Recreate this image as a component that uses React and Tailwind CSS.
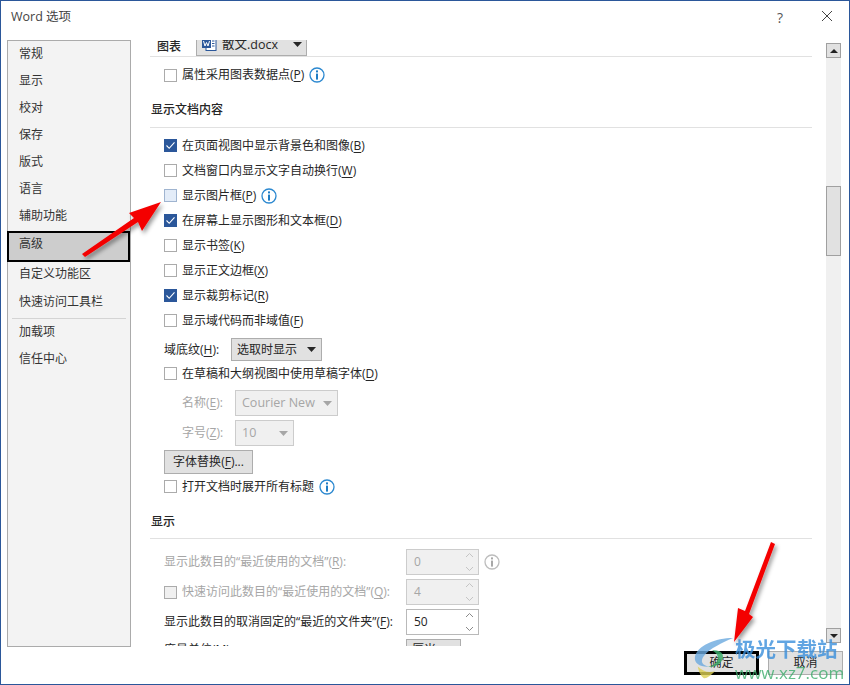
import React from 'react';

const navTop = ['常规', '显示', '校对', '保存', '版式', '语言', '辅助功能'];

const Info = ({ gray }) => (
  <svg width="16" height="16" viewBox="0 0 16 16" className="ml-[5px] shrink-0">
    <circle cx="8" cy="8" r="7" fill="#fff" stroke={gray ? '#bdbdbd' : '#2b88d0'} strokeWidth="1.3" />
    <rect x="7" y="3.4" width="2" height="2" fill={gray ? '#a8a8a8' : '#1f7cc4'} />
    <rect x="7" y="6.6" width="2" height="6" fill={gray ? '#a8a8a8' : '#1f7cc4'} />
  </svg>
);

const Box = ({ checked, hover, disabled }) => {
  if (checked) {
    return (
      <span className="w-[13px] h-[13px] shrink-0 bg-[#2b579a] border border-[#2b579a] flex items-center justify-center">
        <svg width="11" height="11" viewBox="0 0 11 11">
          <path d="M1.5 5.5 L4.2 8.3 L9.5 2.4" fill="none" stroke="#fff" strokeWidth="1.1" />
        </svg>
      </span>
    );
  }
  if (hover) return <span className="w-[13px] h-[13px] shrink-0 bg-[#e3ecf8] border border-[#9fb4d0]" />;
  if (disabled) return <span className="w-[13px] h-[13px] shrink-0 bg-[#f0f0f0] border border-[#ababab]" />;
  return <span className="w-[13px] h-[13px] shrink-0 bg-white border border-[#ababab]" />;
};

// label with the accelerator letter underlined
const Label = ({ text, k, tail }) => (
  <span className="whitespace-nowrap">
    {text}
    {k && <>(<span className="underline underline-offset-2">{k}</span>)</>}
    {tail}
  </span>
);

const Check = ({ text, k, checked, hover, info }) => (
  <div className="h-[25px] shrink-0 flex items-center pl-[14px] text-[#262626]">
    <Box checked={checked} hover={hover} />
    <span className="ml-[5px]"><Label text={text} k={k} /></span>
    {info && <Info />}
  </div>
);

const Caret = ({ color = '#262626' }) => (
  <svg width="9" height="5" viewBox="0 0 9 5" className="shrink-0">
    <path d="M0 0 H9 L4.5 5 Z" fill={color} />
  </svg>
);

const Chevrons = ({ color }) => (
  <svg width="9" height="20" viewBox="0 0 9 20" className="shrink-0">
    <path d="M1 5 L4.5 1.5 L8 5" fill="none" stroke={color} />
    <path d="M1 15 L4.5 18.5 L8 15" fill="none" stroke={color} />
  </svg>
);

const Spin = ({ value, disabled }) => (
  <div className={`w-[73px] h-[26px] shrink-0 flex items-center justify-between pl-[7px] pr-[4px] border ${disabled ? 'bg-[#f0f0f0] border-[#cccccc] text-[#a6a6a6]' : 'bg-white border-[#b9b9b9] text-[#262626]'}`}>
    <span>{value}</span>
    <Chevrons color={disabled ? '#c4c4c4' : '#8a8a8a'} />
  </div>
);

const Heading = ({ children, className }) => (
  <div className={`h-[20px] pl-px pt-[2px] flex items-center text-[#262626] font-medium ${className}`}>{children}</div>
);

const Line = ({ className }) => <div className={`h-px bg-[#e1e1e1] ${className}`} />;

const DisabledSelect = ({ text, width }) => (
  <div className={`${width} h-[26px] bg-[#f0f0f0] border border-[#cccccc] flex items-center justify-between pl-[6px] pr-[5px] text-[#a6a6a6] text-[12.5px]`}>
    <span>{text}</span>
    <Caret color="#a6a6a6" />
  </div>
);

export default function App() {
  return (
    <div className="relative w-[850px] h-[685px] overflow-hidden bg-white border border-[#2b579a] text-[12px] font-['Open_Sans','Noto_Sans_CJK_SC',sans-serif]">
      {/* title bar */}
      <div className="h-[39px] flex items-start pt-[6px] pl-[10px] text-[#444444]">
        <span className="text-[12.5px] mt-px">Word 选项</span>
        <span className="ml-auto text-[14px] text-[#555555]">?</span>
        <svg width="12" height="12" viewBox="0 0 12 12" className="ml-[38px] mr-[16px] mt-[3px]">
          <path d="M1 1 L11 11 M11 1 L1 11" stroke="#444" strokeWidth="1" />
        </svg>
      </div>

      <div className="h-[607px] flex pl-[6px]">
        {/* left nav */}
        <div className="w-[124px] shrink-0 border border-[#ababab] bg-[#f3f3f3] text-[#333333] flex flex-col">
          {navTop.map((n) => (
            <div key={n} className="h-[27px] flex items-center pl-[11px] pb-[2px]">{n}</div>
          ))}
          <div className="h-[31px] -ml-px mt-px border-2 border-black bg-[#cdcdcd] flex items-center pl-[10px] pb-[5px]">高级</div>
          <div className="h-[26px] flex items-center pl-[11px] pb-[2px]">自定义功能区</div>
          <div className="h-[28px] flex items-center pl-[11px]">快速访问工具栏</div>
          <div className="h-px bg-[#d4d4d4] mx-[4px] mt-[2px]" />
          <div className="h-[26px] flex items-center pl-[11px]">加载项</div>
          <div className="h-[27px] flex items-center pl-[11px]">信任中心</div>
        </div>

        {/* scrolled options */}
        <div className="w-[662px] h-[606px] ml-[19px] shrink-0 overflow-hidden flex flex-col">
          <div className="h-[16px] shrink-0 overflow-hidden flex items-end pl-[7px] text-[#262626]">
            <span className="font-medium w-[39px]">图表</span>
            <div className="w-[111px] h-[24px] shrink-0 bg-[#e1e1e1] border border-[#adadad] flex items-center pl-[5px] pr-[4px]">
              <svg width="15" height="14" viewBox="0 0 15 14" className="shrink-0">
                <rect x="4" y="0.5" width="10" height="13" fill="#fff" stroke="#2b579a" />
                <rect x="0" y="2" width="9" height="9" fill="#2b579a" />
                <path d="M1.5 4 L3 9 L4.5 5.5 L6 9 L7.5 4" fill="none" stroke="#fff" />
                <path d="M10 4 H12.5 M10 6.5 H12.5 M10 9 H12.5" stroke="#2b579a" />
              </svg>
              <span className="ml-[5px] mt-[2px] text-[12.5px]">散文.docx</span>
              <span className="ml-auto"><Caret /></span>
            </div>
          </div>
          <Line className="shrink-0" />

          <div className="shrink-0 h-[24px] mt-[6px] flex items-center pl-[14px] text-[#262626]">
            <Box />
            <span className="ml-[5px]"><Label text="属性采用图表数据点" k="P" /></span>
            <Info />
          </div>

          <Heading className="shrink-0 mt-[12px]">显示文档内容</Heading>
          <Line className="shrink-0 mt-[8px] mb-[5px]" />

          <Check checked text="在页面视图中显示背景色和图像" k="B" />
          <Check text="文档窗口内显示文字自动换行" k="W" />
          <Check hover info text="显示图片框" k="P" />
          <Check checked text="在屏幕上显示图形和文本框" k="D" />
          <Check text="显示书签" k="K" />
          <Check text="显示正文边框" k="X" />
          <Check checked text="显示裁剪标记" k="R" />
          <Check text="显示域代码而非域值" k="F" />

          <div className="shrink-0 h-[23px] mt-[5px] flex items-center pl-[14px] text-[#262626]">
            <span className="w-[67px]"><Label text="域底纹" k="H" tail=":" /></span>
            <div className="w-[91px] h-[23px] bg-[#e1e1e1] border border-[#adadad] flex items-center justify-between pl-[5px] pr-[5px]">
              <span>选取时显示</span>
              <Caret />
            </div>
          </div>

          <Check text="在草稿和大纲视图中使用草稿字体" k="D" />

          <div className="shrink-0 mt-[4px] flex items-center pl-[32px] text-[#a6a6a6]">
            <span className="w-[53px]"><Label text="名称" k="E" tail=":" /></span>
            <DisabledSelect text="Courier New" width="w-[103px]" />
          </div>
          <div className="shrink-0 mt-[4px] flex items-center pl-[32px] text-[#a6a6a6]">
            <span className="w-[53px]"><Label text="字号" k="Z" tail=":" /></span>
            <DisabledSelect text="10" width="w-[59px]" />
          </div>

          <div className="shrink-0 mt-[4px] ml-[14px] w-[89px] h-[24px] bg-[#e1e1e1] border border-[#adadad] flex items-center justify-center text-[#262626]">
            <Label text="字体替换" k="F" tail="..." />
          </div>

          <Check info text="打开文档时展开所有标题" />

          <Heading className="shrink-0 mt-[12px]">显示</Heading>
          <Line className="shrink-0 mt-[7px]" />

          <div className="shrink-0 mt-[10px] flex items-center pl-[14px] text-[#a6a6a6]">
            <span className="w-[242px]"><Label text="显示此数目的“最近使用的文档”" k="R" tail=":" /></span>
            <Spin disabled value="0" />
            <Info gray />
          </div>
          <div className="shrink-0 mt-[4px] flex items-center pl-[14px] text-[#a6a6a6]">
            <div className="w-[242px] flex items-center">
              <Box disabled />
              <span className="ml-[5px]"><Label text="快速访问此数目的“最近使用的文档”" k="Q" tail=":" /></span>
            </div>
            <Spin disabled value="4" />
          </div>
          <div className="shrink-0 mt-[4px] flex items-center pl-[14px] text-[#262626]">
            <span className="w-[242px]"><Label text="显示此数目的取消固定的“最近的文件夹”" k="F" tail=":" /></span>
            <Spin value="50" />
          </div>
          <div className="shrink-0 mt-[4px] flex items-start h-[23px] pl-[14px] text-[#262626]">
            <span className="w-[242px] pt-[2px]"><Label text="度量单位" k="M" tail=":" /></span>
            <div className="w-[55px] h-[23px] bg-[#e1e1e1] border border-[#adadad] pl-[5px] pt-[1px]">厘米</div>
          </div>
        </div>

        {/* scrollbar */}
        <div className="w-[15px] h-[600px] ml-[14px] mt-[3px] shrink-0 bg-[#f0f0f0] flex flex-col">
          <div className="h-[15px] shrink-0 bg-[#e1e1e1] border border-[#a0a0a0] flex items-center justify-center">
            <span className="w-0 h-0 border-x-[4px] border-x-transparent border-b-[4px] border-b-[#222222]" />
          </div>
          <div className="h-[70px] shrink-0 mt-[128px] bg-[#e1e1e1] border border-[#a0a0a0]" />
          <div className="h-[15px] shrink-0 mt-auto bg-[#e1e1e1] border border-[#a0a0a0] flex items-center justify-center">
            <span className="w-0 h-0 border-x-[4px] border-x-transparent border-t-[4px] border-t-[#222222]" />
          </div>
        </div>
      </div>

      {/* footer buttons */}
      <div className="h-[37px] flex justify-end items-start pt-[4px] pr-[6px] text-[#262626]">
        <div className="w-[75px] h-[24px] bg-[#e1e1e1] border-[3px] border-black flex items-center justify-center">确定</div>
        <div className="w-[75px] h-[24px] ml-[9px] bg-[#e1e1e1] border border-[#adadad] flex items-center justify-center">取消</div>
      </div>

      {/* red annotation arrows */}
      <svg width="850" height="685" viewBox="0 0 850 685" className="absolute -left-px -top-px pointer-events-none">
        <defs>
          <filter id="arrowShadow" x="-30%" y="-30%" width="160%" height="160%">
            <feDropShadow dx="2" dy="3" stdDeviation="2" floodColor="#000" floodOpacity="0.4" />
          </filter>
        </defs>
        <polygon filter="url(#arrowShadow)" fill="#f40000" points="82,254 85,257 138,222 142,231 161,202 129,213 134,218" />
        <polygon filter="url(#arrowShadow)" fill="#f40000" points="771,542 775,544 749,614 753,617 734,642 738,608 745,611" />
      </svg>

      {/* download site watermark */}
      <div className="absolute left-[692px] top-[635px] pointer-events-none flex">
        <svg width="42" height="44" viewBox="0 0 44 44" className="shrink-0">
          <path d="M42 1 C24 1 4 9 2 21 C1 28 8 32 18 31 C9 30 7 25 12 19 C18 12 30 6 42 1 Z" fill="#6aa9de" opacity="0.8" />
          <path d="M20 14 C28 13 33 17 31 23 C29 29 22 32 16 31 C22 30 26 26 26 22 C26 18 23 16 20 14 Z" fill="#3bab6a" opacity="0.85" />
          <path d="M5 31 C10 36 16 38 23 36 C18 41 14 44 11 43 C8 41 6 36 5 31 Z" fill="#dccf54" opacity="0.8" />
        </svg>
        <div className="flex flex-col">
          <span className="text-[20.5px] leading-[27px] font-bold text-[#3a8fdc] opacity-80 whitespace-nowrap">极光下载站</span>
          <span className="text-[17px] leading-[20px] text-[#3dad6c] opacity-80 whitespace-nowrap">www.xz7.com</span>
        </div>
      </div>
    </div>
  );
}
